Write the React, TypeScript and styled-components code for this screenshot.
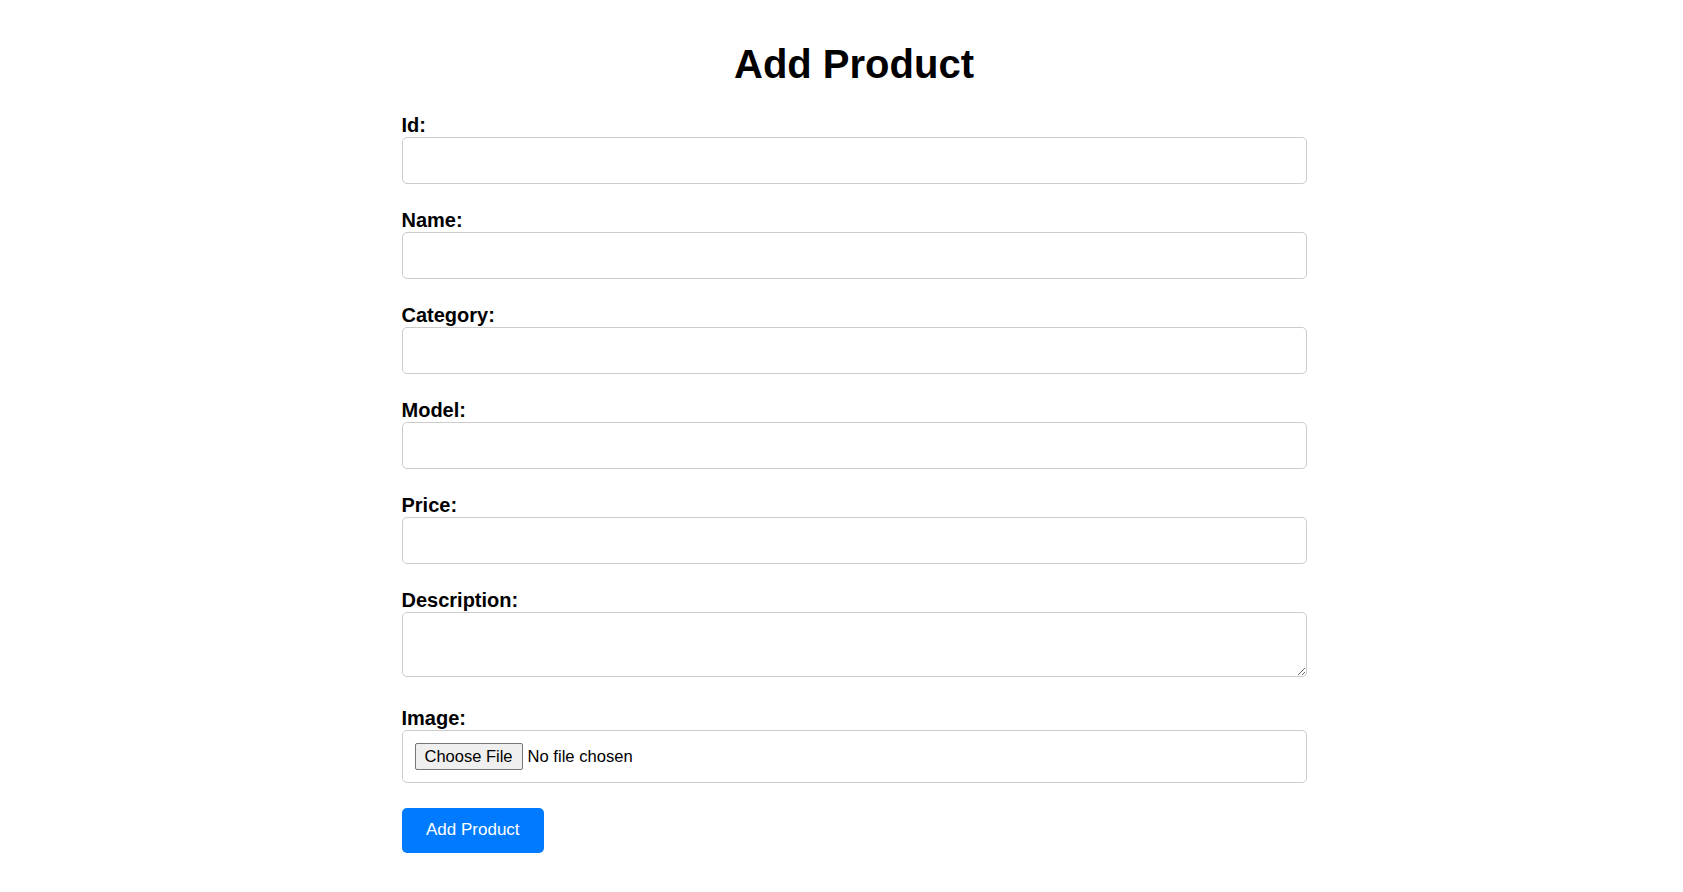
import { createGlobalStyle, styled } from "styled-components";

const GlobalStyle = createGlobalStyle`
    body {
        margin: 0;
        background: #ffffff;
        font-family: "Liberation Sans", Arial, sans-serif;
        color: #000000;
    }
`;

export const Page = styled.div`
    padding-left: 25px;
`;

export const Container = styled.div`
    width: 905px;
    margin: 0 auto;
`;

export const Title = styled.h1`
    font-size: 40px;
    font-weight: bold;
    text-align: center;
    line-height: 45px;
    margin: 41.5px 0 27px;
`;

export const Field = styled.div<{ $gap?: number }>`
    margin-bottom: ${(p) => p.$gap ?? 25}px;
`;

export const Label = styled.label`
    display: block;
    font-size: 20px;
    font-weight: bold;
    line-height: 23px;
`;

export const TextInput = styled.input`
    display: block;
    box-sizing: border-box;
    width: 100%;
    height: 47px;
    padding: 0 12px;
    border: 1px solid #cccccc;
    border-radius: 5px;
    font-family: inherit;
    font-size: 17px;
    outline: none;
`;

export const TextArea = styled.textarea`
    display: block;
    box-sizing: border-box;
    width: 100%;
    height: 65px;
    padding: 10px 12px;
    border: 1px solid #cccccc;
    border-radius: 5px;
    font-family: inherit;
    font-size: 17px;
    outline: none;
`;

export const FileInput = styled.input`
    display: block;
    box-sizing: border-box;
    width: 100%;
    height: 53px;
    padding: 12px 12px;
    border: 1px solid #cccccc;
    border-radius: 5px;
    font-family: inherit;
    font-size: 16.6px;
    color: #000000;

    &::file-selector-button {
        height: 27px;
        padding: 0 9px;
        margin-right: 5px;
        border: 1px solid #767676;
        border-radius: 2px;
        background: #efefef;
        color: #000000;
        font-family: inherit;
        font-size: 16.5px;
    }
`;

export const SubmitButton = styled.button`
    height: 45px;
    padding: 0 24.5px;
    border: none;
    border-radius: 5px;
    background: #007bff;
    color: #ffffff;
    font-family: inherit;
    font-size: 17px;
    cursor: pointer;
`;

const fields = ["Id", "Name", "Category", "Model", "Price"];

export default function App() {
    return (
        <Page>
            <GlobalStyle />
            <Container>
                <Title>Add Product</Title>
                <form onSubmit={(e) => e.preventDefault()}>
                    {fields.map((f) => (
                        <Field key={f}>
                            <Label htmlFor={f}>{f}:</Label>
                            <TextInput id={f} type="text" />
                        </Field>
                    ))}
                    <Field $gap={30}>
                        <Label htmlFor="description">Description:</Label>
                        <TextArea id="description" />
                    </Field>
                    <Field>
                        <Label htmlFor="image">Image:</Label>
                        <FileInput id="image" type="file" />
                    </Field>
                    <SubmitButton type="submit">Add Product</SubmitButton>
                </form>
            </Container>
        </Page>
    );
}
